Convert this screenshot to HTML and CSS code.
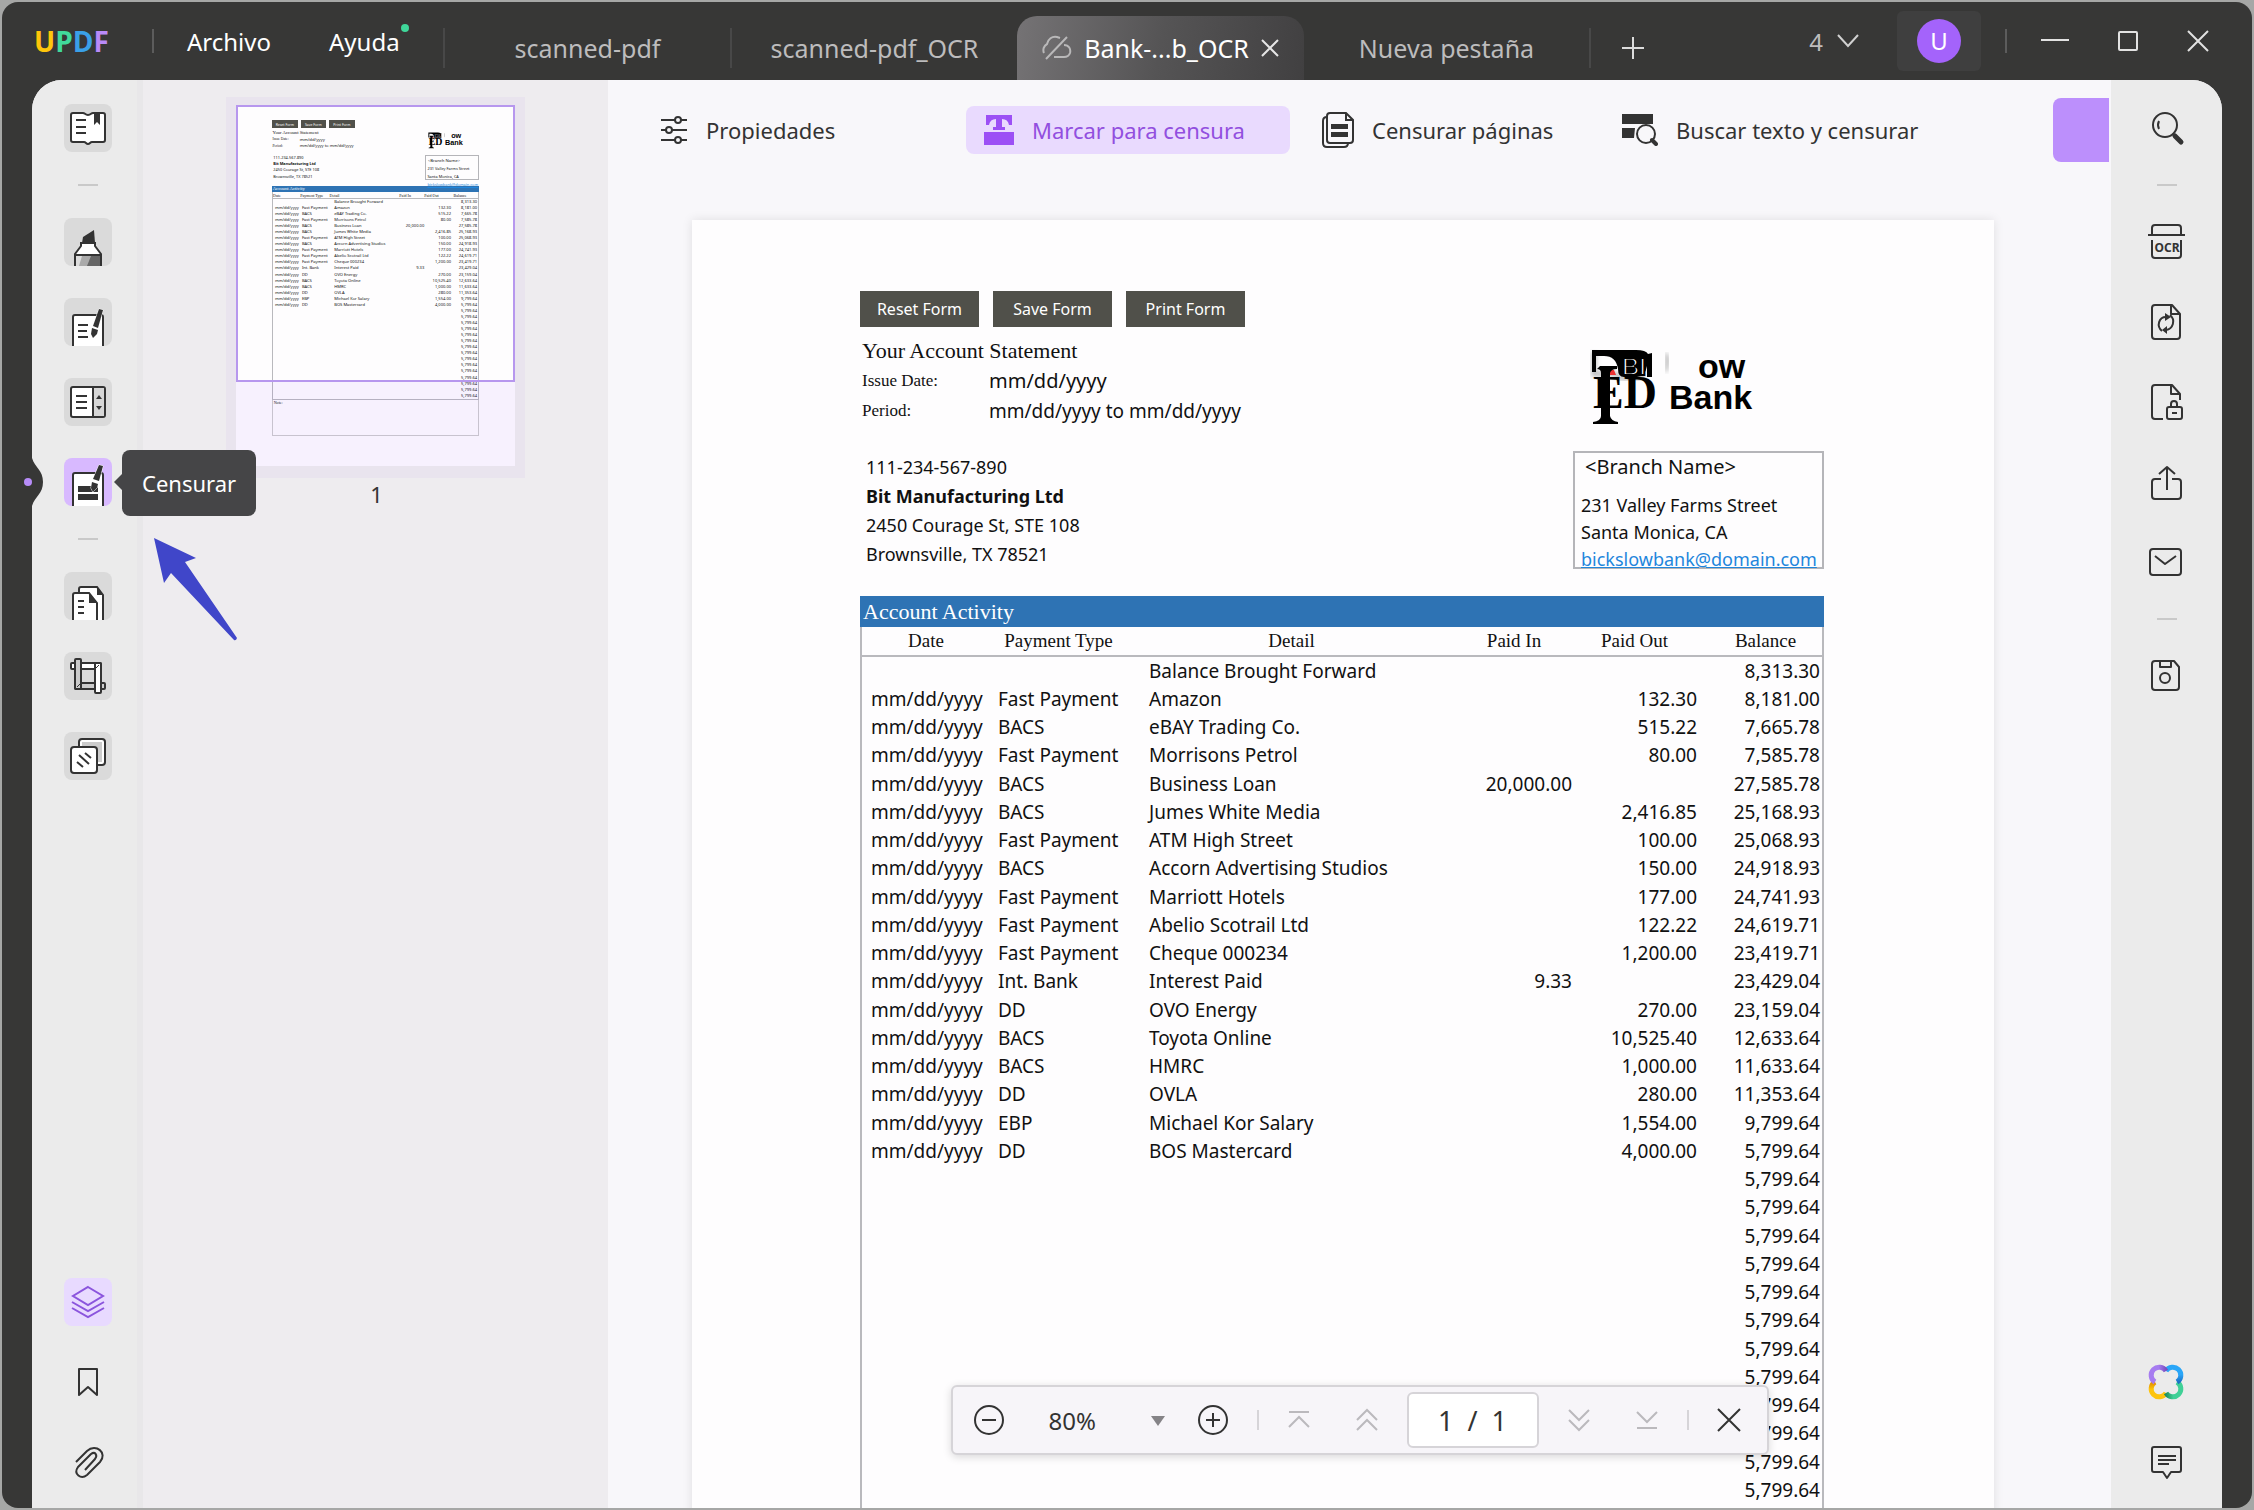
FILE: index.html
```html
<!DOCTYPE html>
<html lang="es">
<head>
    <meta charset="UTF-8">
    <meta name="viewport" content="width=device-width, initial-scale=1.0">
    <title>UPDF</title>
    <link rel="stylesheet" href="styles.css">
</head>
<body>

<div class="window">
    <header class="titlebar">
        <div class="logo"><span class="u">U</span><span class="p">P</span><span class="d">D</span><span class="f">F</span></div>
        <nav class="menu">
            <button>Archivo</button>
            <button class="has-news">Ayuda</button>
        </nav>
        <div class="tabs">
            <button class="tab">scanned-pdf</button>
            <button class="tab">scanned-pdf_OCR</button>
            <button class="tab active">
                <svg width="30" height="26" viewBox="0 0 30 26" fill="none" stroke="#b9b8b9" stroke-width="2"><path d="M2 18a7 7 0 0 1 3-9c1-5 5-8 10-7l3 1M22 10c5 0 7 4 6 8-1 3-3 4-6 4H12M25 2L4 24"/></svg>
                <span>Bank-...b_OCR</span>
                <svg width="18" height="18" viewBox="0 0 18 18" fill="none" stroke="#e6e6e6" stroke-width="2"><path d="M1 1l16 16M17 1L1 17"/></svg>
            </button>
            <button class="tab last">Nueva pestaña</button>
            <button class="add" aria-label="Añadir pestaña"><svg width="24" height="24" viewBox="0 0 24 24" stroke="#dcdcdc" stroke-width="2"><path d="M1 12h22M12 1v22"/></svg></button>
        </div>
        <button class="count">4 <svg width="22" height="14" viewBox="0 0 22 14" fill="none" stroke="#d0d0d0" stroke-width="2"><path d="M1 1l10 11L21 1"/></svg></button>
        <button class="account"><span class="avatar">U</span></button>
        <div class="controls">
            <button aria-label="Minimizar"><svg width="28" height="24" viewBox="0 0 28 24" stroke="#e2e2e2" stroke-width="2"><path d="M0 11h28"/></svg></button>
            <button aria-label="Maximizar"><svg width="22" height="24" viewBox="0 0 22 24" fill="none" stroke="#e2e2e2" stroke-width="2"><rect x="2" y="3" width="18" height="18" rx="1"/></svg></button>
            <button aria-label="Cerrar"><svg width="22" height="24" viewBox="0 0 22 24" stroke="#e2e2e2" stroke-width="2"><path d="M1 2l20 20M21 2L1 22"/></svg></button>
        </div>
    </header>

    <div class="workspace">
        <aside class="rail left">
            <button class="tool" aria-label="Lector"><svg viewBox="0 0 48 48"><path class="paper" d="M9 9h10c2 0 2 2 5 2s3-2 5-2h10q2 0 2 2v25q0 2-2 2H28c-2 0-2 2-4 2s-2-2-4-2H9q-2 0-2-2V11q0-2 2-2z"/><path class="ink" d="M30 9h6v12l-3-3-3 3z"/><path class="line" d="M12 16h10M12 23h10M12 29h10"/></svg></button>
            <hr>
            <button class="tool" aria-label="Comentar"><svg viewBox="0 0 48 48"><path class="ink" d="M18 25l1-6 11-7 1 13z"/><path class="paper" d="M11 49V36l6-8v-3h14v3l6 8v13"/><path fill="#ddd" d="M12 38h24v10H12z"/><path fill="#aaa" d="M18 38h10l-4 10h-9z"/><path fill="#666" d="M27 38h9v10H23z"/><path class="line" d="M11 37h26"/></svg></button>
            <button class="tool" aria-label="Editar"><svg viewBox="0 0 48 48"><path class="paper" d="M9 49V19q0-2 2-2h26q2 0 2 2v30"/><path class="line" d="M14 27h10M14 33h9M14 39h10"/><path class="pen" d="M35 11l4 1-5 18-5-2z"/><path class="pen" d="M28 30l6 2-1 4-4 4-2-4z"/></svg></button>
            <button class="tool" aria-label="Formulario"><svg viewBox="0 0 48 48"><rect class="paper" x="7" y="9" width="34" height="30" rx="2"/><path fill="#d6d6d6" d="M30 10h10v28H30z"/><path class="line" d="M29 9v30M12 18h11M12 24h11M12 30h11"/><path class="ink" d="M32 21l3-4 3 4zM32 28h6l-3 4z"/></svg></button>
            <button class="tool selected" aria-label="Censurar"><svg viewBox="0 0 48 48"><path class="paper" d="M9 49V17q0-2 2-2h26q2 0 2 2v32"/><path class="ink" d="M14 28h20v6H14zM14 36h20v6H14z"/><path class="pen" d="M35 7l4 1-4 15-6-2z"/><path class="pen" d="M28 24l6 2-1 4-4 4-2-4z"/></svg></button>
            <hr>
            <button class="tool" aria-label="Organizar"><svg viewBox="0 0 48 48"><path class="paper" d="M15 49V17q0-2 2-2h16l6 8v26z"/><path class="ink" d="M33 15l6 8h-6z"/><path class="paper" d="M9 49V23q0-2 2-2h14l8 10v18"/><path class="ink" d="M25 21l8 10h-8z"/><path class="line" d="M14 29h6M14 35h6M14 41h6"/></svg></button>
            <button class="tool" aria-label="Recortar"><svg viewBox="0 0 48 48"><rect class="paper" x="7" y="11" width="30" height="6" rx="1"/><rect class="band" x="11" y="31" width="30" height="6" rx="1"/><rect class="band" x="11" y="7" width="6" height="30" rx="1"/><rect class="paper" x="31" y="11" width="6" height="30" rx="1"/><path class="thin" d="M31 17l4-4M13 35l4-4"/></svg></button>
            <button class="tool" aria-label="Lote"><svg viewBox="0 0 48 48"><rect class="paper" x="15" y="7" width="26" height="26" rx="3"/><path fill="#ccc" d="M18 10h20v20H18z"/><rect class="paper" x="7" y="15" width="26" height="26" rx="3"/><path class="line" d="M15 23l10 9M21 21l6 5M13 30l6 5"/></svg></button>
            <div class="rail-bottom">
                <button class="tool layers" aria-label="Miniaturas"><svg viewBox="0 0 48 48" fill="none" stroke="#8b55dd" stroke-width="2"><path d="M24 9l15 9-15 9-15-9zM8 24l16 9 16-9M8 30l16 9 16-9"/></svg></button>
                <button class="tool plain" aria-label="Marcadores"><svg viewBox="0 0 48 48"><path class="stroke" d="M15 11h18v26l-9-8-9 8z"/></svg></button>
                <button class="tool plain" aria-label="Adjuntos"><svg viewBox="0 0 48 48"><path class="stroke" d="M12 24l11-11c9-8 21 2 13 11L23 37c-6 5-14-1-9-8l13-13c4-3 7 1 4 5L21 32"/></svg></button>
            </div>
            <svg class="notch" width="12" height="48" viewBox="0 0 12 48"><path fill="#373736" d="M0 0c3 10 11 12 11 24S3 38 0 48z"/></svg>
        </aside>

        <section class="thumbs">
            <div class="thumb">
                <div class="mini" aria-hidden="true" inert></div>
                <div class="view"></div>
            </div>
            <p>1</p>
        </section>

        <main class="main">
            <div class="toolbar">
                <button class="action props"><svg width="28" height="28" viewBox="0 0 28 28" fill="#f8f7fa" stroke="#333" stroke-width="2"><path d="M1 4h26M1 14h26M1 24h26"/><circle cx="18" cy="4" r="3"/><circle cx="9" cy="14" r="3"/><circle cx="18" cy="24" r="3"/></svg>Propiedades</button>
                <button class="action marked"><svg width="30" height="32" viewBox="0 0 30 32" fill="#9c4ff5"><path d="M2 1h26v10h-3q-1-6-7-6v8h3v3H9v-3h3V5q-6 0-7 6H2zM0 18h30v13H0z"/></svg>Marcar para censura</button>
                <button class="action pages"><svg width="32" height="36" viewBox="0 0 32 36" fill="none" stroke="#333" stroke-width="2"><path d="M5 5q-4 0-4 4v22q0 4 4 4h17q4 0 4-4"/><path d="M8 1h16l7 7v20q0 3-3 3H8q-3 0-3-3V4q0-3 3-3zM24 1v7h7"/><path fill="#333" stroke="none" d="M9 12h17v5H9zM9 20h17v5H9z"/></svg>Censurar páginas</button>
                <button class="action"><svg width="36" height="32" viewBox="0 0 36 32"><path fill="#333" d="M0 0h31v10H0zM0 14h13l-1 10H0z"/><circle cx="24" cy="20" r="9" fill="#f8f7fa" stroke="#333" stroke-width="2"/><path d="M30 26l4 4" stroke="#333" stroke-width="4" stroke-linecap="round"/></svg>Buscar texto y censurar</button>
                <button class="apply" aria-label="Aplicar"></button>
            </div>

            <div class="canvas">
                <article class="sheet">
                    <div class="form-buttons">
                        <button>Reset Form</button>
                        <button>Save Form</button>
                        <button>Print Form</button>
                    </div>
                    <div class="head">
                        <div>
                            <h1>Your Account Statement</h1>
                            <dl>
                                <dt>Issue Date:</dt><dd class="issued">mm/dd/yyyy</dd>
                                <dt>Period:</dt><dd>mm/dd/yyyy to mm/dd/yyyy</dd>
                            </dl>
                            <address>
                                111-234-567-890<br>
                                <strong>Bit Manufacturing Ltd</strong><br>
                                2450 Courage St, STE 108<br>
                                Brownsville, TX 78521
                            </address>
                        </div>
                        <div class="bank">
                            <svg width="200" height="80" viewBox="0 0 200 80">
                                <defs><filter id="soft"><feGaussianBlur stdDeviation="2"/></filter></defs>
                                <path d="M4 4v22h20l8 4h20V10" fill="none" stroke="#bbb" stroke-width="5" filter="url(#soft)"/>
                                <path d="M2 2h44q10 0 12 4l4-1v24h-5V18q-2 11-10 11H34q-6 0-6-8-2-13-14-13H6v16H2z"/>
                                <text class="sans" x="32" y="27" font-size="24" fill="#fff" stroke="#000" stroke-width="2">BI</text>
                                <path d="M18 22h6l2 5h-8z" fill="#e33"/>
                                <text class="serif" x="3" y="60" font-size="46">ED</text>
                                <path d="M10 18h17v3q-6 0-7 4v43q1 5 8 6v2H3v-2q8-1 8-6V25q0-4-4-4z"/>
                                <path d="M76 6q5 4 0 18z" fill="#bbb" stroke="#bbb" stroke-width="2" filter="url(#soft)"/>
                                <text class="sans" x="108" y="30" font-size="34">ow</text>
                                <text class="sans" x="79" y="61" font-size="34">Bank</text>
                            </svg>
                            <div class="branch">
                                <p class="name">&lt;Branch Name&gt;</p>
                                <p>231 Valley Farms Street</p>
                                <p>Santa Monica, CA</p>
                                <p><a href="mailto:bickslowbank@domain.com">bickslowbank@domain.com</a></p>
                            </div>
                        </div>
                    </div>
                    <table>
                        <caption>Account Activity</caption>
                        <colgroup><col class="c-date"><col class="c-type"><col><col class="c-in"><col class="c-out"><col class="c-bal"></colgroup>
                        <thead>
                            <tr><th>Date</th><th>Payment Type</th><th>Detail</th><th>Paid In</th><th>Paid Out</th><th>Balance</th></tr>
                        </thead>
                        <tbody></tbody>
                    </table>
                    <div class="note">Note:</div>
                </article>
            </div>

            <div class="pager">
                <button aria-label="Reducir"><svg width="32" height="32" viewBox="0 0 32 32" fill="none" stroke="#333" stroke-width="2"><circle cx="16" cy="16" r="14"/><path d="M9 16h14"/></svg></button>
                <label class="zoom">
                    <select aria-label="Zoom"><option>80%</option><option>100%</option></select>
                    <svg width="14" height="12" viewBox="0 0 14 12"><path fill="#858387" d="M0 1h14L7 11z"/></svg>
                </label>
                <button aria-label="Ampliar"><svg width="32" height="32" viewBox="0 0 32 32" fill="none" stroke="#333" stroke-width="2"><circle cx="16" cy="16" r="14"/><path d="M9 16h14M16 9v14"/></svg></button>
                <i></i>
                <button class="nav" aria-label="Primera página"><svg width="24" height="24" viewBox="0 0 24 24"><path d="M2 4h20M2 19l10-10 10 10"/></svg></button>
                <button class="nav" aria-label="Página anterior"><svg width="24" height="24" viewBox="0 0 24 24"><path d="M2 12L12 2l10 10M2 22l10-10 10 10"/></svg></button>
                <input type="text" value="1&nbsp; /&nbsp; 1" aria-label="Página">
                <button class="nav" aria-label="Página siguiente"><svg width="24" height="24" viewBox="0 0 24 24"><path d="M2 2l10 10L22 2M2 12l10 10 10-10"/></svg></button>
                <button class="nav" aria-label="Última página"><svg width="24" height="24" viewBox="0 0 24 24"><path d="M2 4l10 10L22 4M2 20h20"/></svg></button>
                <i></i>
                <button aria-label="Cerrar barra"><svg width="24" height="24" viewBox="0 0 24 24" stroke="#333" stroke-width="2"><path d="M1 1l22 22M23 1L1 23"/></svg></button>
            </div>
        </main>

        <aside class="rail right">
            <button class="tool plain" aria-label="Buscar"><svg viewBox="0 0 48 48"><circle class="stroke" cx="22" cy="21" r="12"/><path class="stroke" d="M16 17q-2 4 0 8"/><path d="M32 32l6 6" stroke="#333" stroke-width="5" stroke-linecap="round"/></svg></button>
            <hr>
            <button class="tool plain" aria-label="OCR"><svg viewBox="0 0 48 48"><path class="stroke" d="M9 17v-7q0-3 3-3h23q3 0 3 3v7M5 17h37M9 22v15q0 3 3 3h23q3 0 3-3V22"/><text x="24" y="34" text-anchor="middle" class="ocr">OCR</text></svg></button>
            <button class="tool plain" aria-label="Convertir"><svg viewBox="0 0 48 48"><path class="stroke" d="M12 7h17l8 9v22q0 3-3 3H12q-3 0-3-3V10q0-3 3-3zM28 7v9h9M19 33c-6-5-3-14 4-14M27 17c6 5 3 14-4 15"/><path class="ink" d="M22 15l6 4-6 4zM24 28v8l-5-4z"/></svg></button>
            <button class="tool plain" aria-label="Proteger"><svg viewBox="0 0 48 48"><path class="stroke" d="M20 41h-8q-3 0-3-3V10q0-3 3-3h17l8 9v6M28 7v9h9M28 29v-3q0-3 3-3t3 3v3"/><rect class="stroke" x="24" y="29" width="15" height="12" rx="2"/><path class="stroke" d="M29 35h5"/></svg></button>
            <button class="tool plain" aria-label="Compartir"><svg viewBox="0 0 48 48"><path class="stroke" d="M18 21h-6q-3 0-3 3v14q0 3 3 3h23q3 0 3-3V24q0-3-3-3h-6M24 32V9M16 16l8-7 8 7"/></svg></button>
            <button class="tool plain" aria-label="Correo"><svg viewBox="0 0 48 48"><rect class="stroke" x="7" y="11" width="31" height="26" rx="3"/><path class="stroke" d="M12 18l10 8 11-8"/></svg></button>
            <hr>
            <button class="tool plain" aria-label="Guardar"><svg viewBox="0 0 48 48"><path class="stroke" d="M12 9h19l5 6v20q0 3-3 3H12q-3 0-3-3V12q0-3 3-3zM17 9v6h11V9"/><circle class="stroke" cx="22" cy="26" r="5"/></svg></button>
            <div class="rail-bottom">
                <button class="tool plain" aria-label="UPDF AI"><svg viewBox="0 0 48 48" fill="none" stroke-width="5">
                    <defs>
                        <linearGradient id="g1"><stop offset="0.5" stop-color="#a67cf0"/><stop offset="1" stop-color="#7a4fc0"/></linearGradient>
                        <linearGradient id="g2" x2="0" y2="1"><stop offset="0.5" stop-color="#2aa6f8"/><stop offset="1" stop-color="#1c6fc4"/></linearGradient>
                        <linearGradient id="g3"><stop offset="0" stop-color="#1f9060"/><stop offset="0.5" stop-color="#40d096"/></linearGradient>
                        <linearGradient id="g4" x2="0" y2="1"><stop offset="0" stop-color="#e08a00"/><stop offset="0.5" stop-color="#fdc40e"/></linearGradient>
                    </defs>
                    <path stroke="url(#g4)" d="M12 24a8 8 0 1 0 11 11"/>
                    <path stroke="url(#g3)" d="M23 35a8 8 0 1 0 11-11"/>
                    <path stroke="url(#g2)" d="M34 24a8 8 0 1 0-11-11"/>
                    <path stroke="url(#g1)" d="M23 13a8 8 0 1 0-11 11"/></svg></button>
                <button class="tool plain" aria-label="Comentarios"><svg viewBox="0 0 48 48"><path class="stroke" d="M11 9h25q2 0 2 2v21q0 2-2 2h-8l-4 6-4-6h-9q-2 0-2-2V11q0-2 2-2zM15 18h18M15 22h18M15 26h11"/></svg></button>
            </div>
        </aside>
    </div>

    <span class="dot"></span>
    <div class="tooltip" role="tooltip">Censurar</div>
    <svg class="arrow" width="86" height="106" viewBox="0 0 86 106"><path fill="#4046c9" d="M2 1l42 20-11 4 52 76q-1 3-3 2L19 36l-7 10z"/></svg>
</div>

<script>
    const rows = [
        ["", "", "Balance Brought Forward", "", "", "8,313.30"],
        ["mm/dd/yyyy", "Fast Payment", "Amazon", "", "132.30", "8,181.00"],
        ["mm/dd/yyyy", "BACS", "eBAY Trading Co.", "", "515.22", "7,665.78"],
        ["mm/dd/yyyy", "Fast Payment", "Morrisons Petrol", "", "80.00", "7,585.78"],
        ["mm/dd/yyyy", "BACS", "Business Loan", "20,000.00", "", "27,585.78"],
        ["mm/dd/yyyy", "BACS", "Jumes White Media", "", "2,416.85", "25,168.93"],
        ["mm/dd/yyyy", "Fast Payment", "ATM High Street", "", "100.00", "25,068.93"],
        ["mm/dd/yyyy", "BACS", "Accorn Advertising Studios", "", "150.00", "24,918.93"],
        ["mm/dd/yyyy", "Fast Payment", "Marriott Hotels", "", "177.00", "24,741.93"],
        ["mm/dd/yyyy", "Fast Payment", "Abelio Scotrail Ltd", "", "122.22", "24,619.71"],
        ["mm/dd/yyyy", "Fast Payment", "Cheque 000234", "", "1,200.00", "23,419.71"],
        ["mm/dd/yyyy", "Int. Bank", "Interest Paid", "9.33", "", "23,429.04"],
        ["mm/dd/yyyy", "DD", "OVO Energy", "", "270.00", "23,159.04"],
        ["mm/dd/yyyy", "BACS", "Toyota Online", "", "10,525.40", "12,633.64"],
        ["mm/dd/yyyy", "BACS", "HMRC", "", "1,000.00", "11,633.64"],
        ["mm/dd/yyyy", "DD", "OVLA", "", "280.00", "11,353.64"],
        ["mm/dd/yyyy", "EBP", "Michael Kor Salary", "", "1,554.00", "9,799.64"],
        ["mm/dd/yyyy", "DD", "BOS Mastercard", "", "4,000.00", "5,799.64"]
    ];

    // the rest of the form only carries the balance forward
    while (rows.length < 33) {
        rows.push(["", "", "", "", "", "5,799.64"]);
    }

    const tbody = document.querySelector('tbody');
    rows.forEach(row => {
        const tr = tbody.insertRow();
        row.forEach(text => tr.insertCell().textContent = text);
    });

    // the thumbnail is a small copy of the page
    const sheet = document.querySelector('.sheet');
    document.querySelector('.mini').appendChild(sheet.cloneNode(true));
</script>

</body>
</html>
```
FILE: styles.css
```css
* {
    box-sizing: border-box;
}
body {
    margin: 0;
    height: 100vh;
    padding: 2px;
    background-color: #a6a7a6;
    font-family: "Noto Sans", "Open Sans", sans-serif;
    font-size: 22px;
    color: #333;
    overflow: hidden;
}
button {
    border: none;
    background: none;
    padding: 0;
    font: inherit;
    color: inherit;
    cursor: pointer;
}
svg {
    display: block;
    flex: none;
}
p, h1, dl, dd {
    margin: 0;
}
.window {
    position: relative;
    display: flex;
    flex-direction: column;
    height: 100%;
    border-radius: 16px;
    background-color: #373736;
    overflow: hidden;
}

/* title bar */
.titlebar {
    display: flex;
    align-items: center;
    height: 78px;
    flex: none;
    color: #bdbcbd;
    font-size: 24px;
}
.logo {
    width: 152px;
    padding-left: 32px;
    border-right: 2px solid #5c5c5c;
    font-family: "Open Sans", sans-serif;
    font-size: 28px;
    line-height: 24px;
    font-weight: bold;
}
.logo .u { color: #ffc60b; }
.logo .p { color: #41d99b; }
.logo .d { color: #3aa0e8; }
.logo .f { color: #b98af8; }
.menu {
    display: flex;
    gap: 58px;
    width: 289px;
    padding-left: 33px;
    color: #fff;
}
.has-news {
    position: relative;
}
.has-news::after {
    content: "";
    position: absolute;
    top: -1px;
    right: -9px;
    width: 8px;
    height: 8px;
    border-radius: 50%;
    background-color: #3fd79a;
}
.tabs {
    display: flex;
    align-items: center;
    align-self: flex-end;
    height: 64px;
}
.tab {
    width: 287px;
    height: 40px;
    border-left: 2px solid #484848;
    font-size: 25px;
    line-height: 36px;
}
.tab.active {
    display: flex;
    align-items: center;
    justify-content: center;
    gap: 12px;
    height: 64px;
    border: none;
    border-radius: 20px 20px 0 0;
    background: linear-gradient(100deg, #757375, #555455 50%, #414041);
    color: #fff;
}
.tab.last {
    border-left: none;
    border-right: 2px solid #484848;
}
.add {
    margin-left: 30px;
}
.count {
    display: flex;
    align-items: center;
    gap: 14px;
    margin-left: auto;
    margin-right: 38px;
}
.account {
    display: flex;
    align-items: center;
    justify-content: center;
    width: 84px;
    height: 60px;
    border-radius: 6px;
    background-color: #3f3f3f;
}
.avatar {
    width: 44px;
    height: 44px;
    border-radius: 50%;
    background-color: #a463fb;
    color: #fff;
    line-height: 44px;
}
.controls {
    display: flex;
    gap: 48px;
    margin: 0 43px 0 24px;
    padding-left: 34px;
    border-left: 2px solid #5c5c5c;
}

/* side rails */
.workspace {
    display: flex;
    flex: 1;
    min-height: 0;
    margin: 0 30px;
    border-radius: 30px 30px 0 0;
    background-color: #f8f7fa;
    overflow: hidden;
}
.rail {
    position: relative;
    display: flex;
    flex-direction: column;
    gap: 32px;
    width: 111px;
    flex: none;
    padding: 24px 0 22px 32px;
    background-color: #ebebeb;
}
.rail.left {
    border-right: 6px solid #e8e7e9;
}
.rail hr {
    width: 20px;
    height: 2px;
    margin: 0 0 0 14px;
    border: none;
    background-color: #c9c9c9;
}
.tool {
    width: 48px;
    height: 48px;
    flex: none;
    border-radius: 8px;
    background-color: #dadada;
    overflow: hidden;
}
.tool.selected {
    background-color: #d8b9ff;
}
.tool.layers {
    background-color: #e8daff;
}
.tool.plain {
    background: none;
}
.rail-bottom {
    display: flex;
    flex-direction: column;
    gap: 32px;
    margin-top: auto;
}
.paper {
    fill: #fff;
    stroke: #333;
    stroke-width: 2;
}
.band {
    fill: #ccc;
    stroke: #333;
    stroke-width: 2;
}
.ink {
    fill: #333;
}
.pen {
    fill: #333;
    stroke: #fff;
    stroke-width: 1;
    paint-order: stroke;
}
.line, .stroke {
    fill: none;
    stroke: #333;
    stroke-width: 2;
    stroke-linejoin: round;
}
.thin {
    stroke: #333;
}
.ocr {
    fill: #333;
    font-size: 12px;
    font-weight: bold;
}
.notch {
    position: absolute;
    left: 0;
    top: 378px;
}
.dot {
    position: absolute;
    left: 22px;
    top: 476px;
    width: 8px;
    height: 8px;
    border-radius: 50%;
    background-color: #b78cf8;
}
.tooltip {
    position: absolute;
    left: 120px;
    top: 448px;
    padding: 0 20px;
    border-radius: 8px;
    background-color: #454547;
    color: #fff;
    line-height: 66px;
}
.tooltip::before {
    content: "";
    position: absolute;
    left: -8px;
    top: 23px;
    border: 9px solid transparent;
    border-left: none;
    border-right-color: #454547;
}
.arrow {
    position: absolute;
    left: 150px;
    top: 535px;
}

/* thumbnails */
.thumbs {
    width: 465px;
    flex: none;
    padding: 25px 93px 0;
    background-color: #eeecef;
    text-align: center;
    line-height: 36px;
}
.thumb {
    position: relative;
    height: 361px;
    box-shadow: 0 2px 0 10px #e9e4ee;
    background-color: #fff;
    text-align: left;
    line-height: normal;
}
.thumbs p {
    margin-top: 10px;
    padding-left: 2px;
}
.mini {
    height: 361px;
    overflow: hidden;
}
.mini .sheet {
    zoom: 0.2145;
    box-shadow: none;
}
.mini .note {
    border-color: #ccc;
}
.view {
    position: absolute;
    inset: 0;
    border-bottom: 84px solid rgba(160, 90, 255, 0.07);
}
.view::after {
    content: "";
    position: absolute;
    inset: 0;
    border: 2px solid #b797ee;
}

/* redaction toolbar */
.main {
    position: relative;
    flex: 1;
    min-width: 0;
}
.toolbar {
    display: flex;
    align-items: center;
    height: 100px;
    padding: 0 2px 0 52px;
}
.action {
    display: flex;
    align-items: center;
    gap: 18px;
    height: 48px;
    white-space: nowrap;
}
.action.props {
    width: 306px;
}
.action.marked {
    width: 324px;
    margin-right: 32px;
    padding-left: 18px;
    border-radius: 8px;
    background-color: #e9dafe;
    color: #924fdf;
}
.action.pages {
    width: 300px;
}
.apply {
    width: 56px;
    height: 64px;
    margin-left: auto;
    border-radius: 8px 0 0 8px;
    background-color: #bc8ffc;
}

/* statement page */
.canvas {
    padding: 40px 117px 0 84px;
}
.sheet {
    min-height: 1689px;
    padding: 71px 170px 0 168px;
    background-color: #fefdfe;
    box-shadow: 0 0 10px rgba(0, 0, 0, 0.1);
    font-size: 19px;
    color: #111;
}
.form-buttons {
    display: flex;
    gap: 14px;
    margin-bottom: 9px;
}
.form-buttons button {
    width: 119px;
    height: 36px;
    background-color: #50504a;
    color: #fff;
    font-size: 16px;
}
.head {
    display: flex;
    justify-content: space-between;
    height: 260px;
}
h1, dt, caption, th, .note {
    font-family: "Liberation Serif", serif;
    font-weight: normal;
}
h1 {
    padding-left: 2px;
    font-size: 22px;
    line-height: 30px;
}
dl {
    display: grid;
    grid-template-columns: 127px auto;
    padding-left: 2px;
    line-height: 30px;
}
dt {
    font-size: 17px;
}
.issued {
    font-size: 20px;
}
address {
    margin-top: 27px;
    padding-left: 6px;
    font-size: 18px;
    font-style: normal;
    line-height: 29px;
}
.bank {
    width: 251px;
    padding-top: 12px;
}
.bank svg {
    margin-left: 17px;
}
.serif {
    font-family: "Liberation Serif", serif;
    font-weight: bold;
}
.sans {
    font-family: "Liberation Sans", sans-serif;
    font-weight: bold;
}
.branch {
    height: 118px;
    margin-top: 23px;
    padding-left: 6px;
    border: 2px solid #b5b5b9;
    font-size: 18px;
    line-height: 27px;
}
.branch .name {
    padding-left: 4px;
    margin-bottom: 12px;
    font-size: 20px;
}
.branch a {
    color: #1f86dc;
}
table {
    width: 100%;
    table-layout: fixed;
    border-collapse: collapse;
    border: 2px solid #b9b9bd;
    border-top: none;
}
caption {
    padding-left: 3px;
    background-color: #2e73b4;
    color: #fff;
    font-size: 22px;
    line-height: 31px;
    text-align: left;
}
.c-date { width: 129px; }
.c-type { width: 137px; }
.c-in { width: 116px; }
.c-out { width: 125px; }
.c-bal { width: 126px; }
th {
    height: 29px;
    padding: 0;
    border-bottom: 2px solid #b9b9bd;
    font-size: 19px;
}
th:last-child {
    padding-left: 12px;
}
td {
    height: 28px;
    padding: 0;
    line-height: 28px;
    text-align: right;
    white-space: nowrap;
}
tr:nth-child(4n + 1) td {
    height: 29px;
}
td:nth-child(1) {
    padding-left: 9px;
    text-align: left;
}
td:nth-child(2) {
    padding-left: 8px;
    text-align: left;
}
td:nth-child(3) {
    padding-left: 22px;
    text-align: left;
}
td:nth-child(6) {
    padding-right: 2px;
}
.note {
    height: 168px;
    padding-left: 3px;
    border: 2px solid #b9b9bd;
    border-top: none;
}

/* floating page bar */
.pager {
    position: absolute;
    left: 0;
    right: 0;
    bottom: 53px;
    display: flex;
    align-items: center;
    gap: 28px;
    width: 818px;
    height: 70px;
    margin: 0 auto;
    padding-left: 20px;
    border: 2px solid #d6d4d8;
    border-radius: 6px;
    background-color: #f7f5f9;
    box-shadow: 0 2px 8px rgba(0, 0, 0, 0.15);
}
.zoom {
    position: relative;
    width: 136px;
}
.zoom select {
    width: 100%;
    padding: 0 16px;
    border: none;
    appearance: none;
    background: none;
    color: #333;
    font: inherit;
    font-size: 24px;
}
.zoom svg {
    position: absolute;
    right: 4px;
    top: 11px;
    pointer-events: none;
}
.pager i {
    width: 2px;
    height: 20px;
    background-color: #d6d4d8;
}
.nav {
    fill: none;
    stroke: #bbb9bd;
    stroke-width: 2;
}
.nav + .nav {
    margin-left: 16px;
}
.pager input {
    width: 132px;
    height: 56px;
    padding: 0;
    border: 2px solid #d6d4d8;
    border-radius: 6px;
    background-color: #fff;
    color: #333;
    font: inherit;
    font-size: 27px;
    text-align: center;
}
```
